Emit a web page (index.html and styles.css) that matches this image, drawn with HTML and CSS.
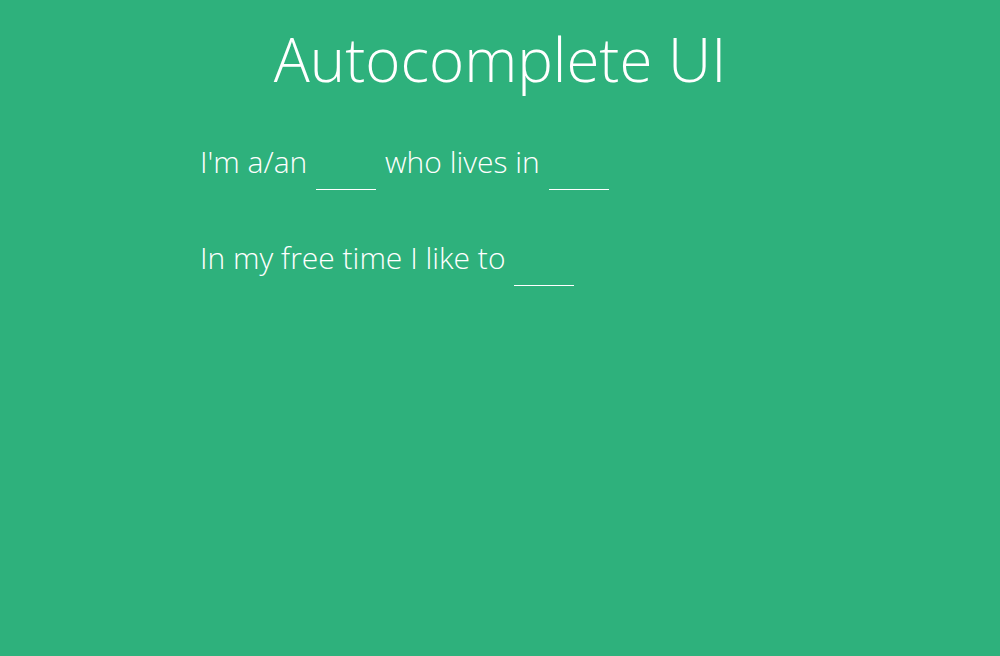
FILE: index.html
```html
<!DOCTYPE html>
<html>
<head>
<meta charset="utf-8">
<link rel="stylesheet" href="styles.css">
</head>
<body>
<h1 class="title">Autocomplete UI</h1>
<div class="content">
  <p class="line">I'm a/an <input class="blank" type="text"> who lives in <input class="blank" type="text"></p>
  <p class="line">In my free time I like to <input class="blank" type="text"></p>
</div>
</body>
</html>
```
FILE: styles.css
```css
html, body {
  margin: 0;
  padding: 0;
  height: 100%;
}
body {
  background: #2eb17c;
  color: #fff;
  font-family: "Open Sans", sans-serif;
  font-weight: 300;
}
.title {
  margin: 0;
  padding-top: 18px;
  text-align: center;
  font-size: 60px;
  font-weight: 300;
  line-height: 82px;
}
.content {
  width: 600px;
  margin: 0 auto;
  padding-top: 41px;
}
.line {
  margin: 0 0 47px 0;
  font-size: 30px;
  line-height: 41px;
}
.blank {
  width: 60px;
  height: 41px;
  margin: 0 1px;
  background: transparent;
  border: none;
  border-bottom: 1px solid #fff;
  color: #fff;
  font-family: inherit;
  font-weight: 300;
  font-size: 30px;
  line-height: 41px;
  padding: 0 0 7px 0;
  outline: none;
  vertical-align: baseline;
}
```
